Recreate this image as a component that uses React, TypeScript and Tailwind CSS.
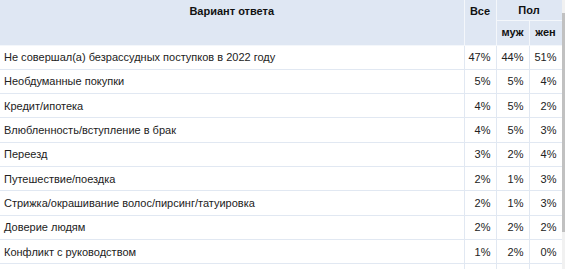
const rows: [string, string, string, string][] = [
  ['Не совершал(а) безрассудных поступков в 2022 году', '47%', '44%', '51%'],
  ['Необдуманные покупки', '5%', '5%', '4%'],
  ['Кредит/ипотека', '4%', '5%', '2%'],
  ['Влюбленность/вступление в брак', '4%', '5%', '3%'],
  ['Переезд', '3%', '2%', '4%'],
  ['Путешествие/поездка', '2%', '1%', '3%'],
  ['Стрижка/окрашивание волос/пирсинг/татуировка', '2%', '1%', '3%'],
  ['Доверие людям', '2%', '2%', '2%'],
  ['Конфликт с руководством', '1%', '2%', '0%'],
  ['', '', '', ''],
];

export default function App() {
  return (
    <div className="relative w-[565px] h-[269px] overflow-hidden bg-white font-['Liberation_Sans',Arial,sans-serif] text-[11px] text-[#222]">
      <table className="w-[562px] table-fixed border-collapse">
        <colgroup>
          <col className="w-[464px]" />
          <col className="w-[32px]" />
          <col className="w-[33px]" />
          <col className="w-[33px]" />
        </colgroup>
        <thead className="bg-[#dfe7f3] font-bold text-[#111]">
          <tr className="h-[20px]">
            <th rowSpan={2} className="border-r border-b border-[#f4f7fb] align-top pt-[3px] font-bold">
              Вариант ответа
            </th>
            <th rowSpan={2} className="border-r border-b border-[#f4f7fb] align-top pt-[3px] font-bold">
              Все
            </th>
            <th colSpan={2} className="border-b border-r border-[#f4f7fb] font-bold">
              Пол
            </th>
          </tr>
          <tr className="h-[25px]">
            <th className="border-r border-b border-[#f4f7fb] font-bold">муж</th>
            <th className="border-r border-b border-[#f4f7fb] font-bold">жен</th>
          </tr>
        </thead>
        <tbody>
          {rows.map((r, i) => (
            <tr key={i} className="h-[24.33px]">
              <td className="border-b border-r border-[#e1e8f2] pl-[4px] whitespace-nowrap">{r[0]}</td>
              <td className="border-b border-r border-[#e1e8f2] text-right pr-[5px]">{r[1]}</td>
              <td className="border-b border-r border-[#e1e8f2] text-right pr-[5px]">{r[2]}</td>
              <td className="border-b border-r border-[#e1e8f2] text-right pr-[5px]">{r[3]}</td>
            </tr>
          ))}
        </tbody>
      </table>
      {/* scrollbar */}
      <div className="absolute right-0 top-0 h-full w-[3px] bg-[#f1f1f1]">
        <div className="mt-[13px] h-[219px] w-full bg-[#c1c1c1]" />
      </div>
    </div>
  );
}
